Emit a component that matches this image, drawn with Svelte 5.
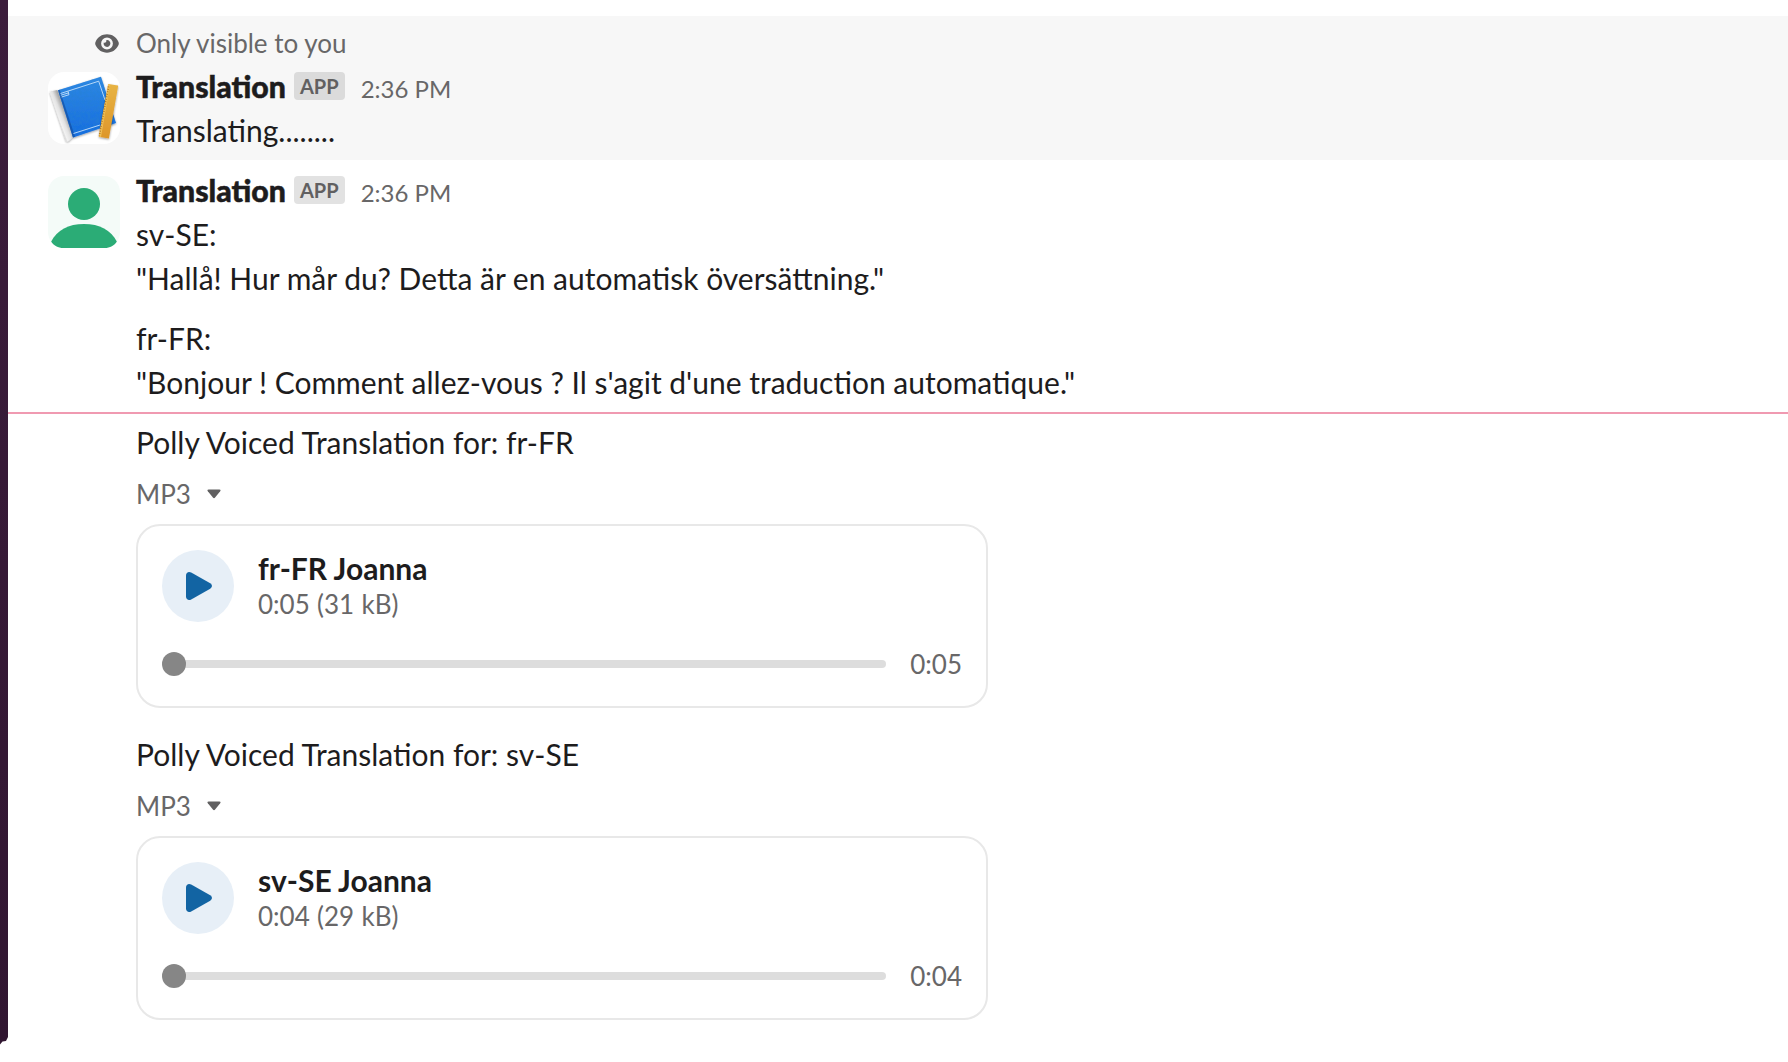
<script>
  const files = [
    { lang: 'fr-FR', length: '0:05', size: '31 kB' },
    { lang: 'sv-SE', length: '0:04', size: '29 kB' },
  ];
</script>

{#snippet author()}
  <div class="author">
    <span class="name">Translation</span>
    <span class="badge">APP</span>
    <span class="time">2:36 PM</span>
  </div>
{/snippet}

<div class="window">
  <svg class="rail" width="8" height="1044" viewBox="0 0 8 1044">
    <defs>
      <linearGradient id="rail" x1="0" y1="0" x2="0" y2="1">
        <stop offset="0" stop-color="#3c1d3c" />
        <stop offset="1" stop-color="#311631" />
      </linearGradient>
    </defs>
    <path d="M0 0H8V1037L6 1041L2.500 1041.500L0 1044.500Z" fill="url(#rail)" />
  </svg>

  <main>
    <section class="message ephemeral">
      <div class="notice">
        <svg class="eye" width="24" height="20" viewBox="0 0 24 20">
          <path fill="#616061" fill-rule="evenodd" d="M12 1.300C6.800 1.300 2.900 4 .5 8.900Q-.1 10.500 .5 12.100C2.900 17 6.800 19.700 12 19.700S21.100 17 23.500 12.100Q24.100 10.500 23.500 8.900C21.100 4 17.200 1.300 12 1.300ZM12 4.600a5.900 5.900 0 1 1 0 11.800a5.900 5.900 0 0 1 0-11.800Z" />
          <path fill="#616061" d="M12 7.100a3.400 3.400 0 1 1-3.200 2.300a1.700 1.700 0 0 0 2.400-2.200Q11.500 7.100 12 7.100Z" />
        </svg>
        <span>Only visible to you</span>
      </div>
      <div class="row">
        <svg class="avatar" width="72" height="72" viewBox="0 0 72 72">
          <defs>
            <linearGradient id="cover" x1="0" y1="0" x2="0" y2="1">
              <stop offset="0" stop-color="#2f89e4" />
              <stop offset="1" stop-color="#146be0" />
            </linearGradient>
            <linearGradient id="pages" gradientUnits="userSpaceOnUse" x1="7" y1="44" x2="17" y2="40">
              <stop offset="0" stop-color="#c9c9c9" />
              <stop offset=".25" stop-color="#f2f2f2" />
              <stop offset=".6" stop-color="#e2e2e2" />
              <stop offset="1" stop-color="#a9a9a9" />
            </linearGradient>
            <linearGradient id="ruler" x1="0" y1="0" x2="0" y2="1">
              <stop offset="0" stop-color="#e8b445" />
              <stop offset="1" stop-color="#dd962a" />
            </linearGradient>
            <filter id="shade" x="-20%" y="-20%" width="140%" height="140%">
              <feDropShadow dx="0" dy="1" stdDeviation="1.100" flood-color="#000" flood-opacity=".4" />
            </filter>
            <filter id="grain">
              <feTurbulence type="fractalNoise" baseFrequency=".35" numOctaves="2" seed="4" />
              <feColorMatrix values="0 0 0 0 .02  0 0 0 0 .22  0 0 0 0 .62  2 0 0 0 -.65" />
              <feComposite in2="SourceGraphic" operator="in" />
            </filter>
          </defs>
          <rect width="72" height="72" rx="16" fill="#fff" />
          <g filter="url(#shade)">
            <path d="M2 20.500Q1.800 19.600 2.800 19.300L9.500 18L25 65L20.500 69Q18.800 70 18 68.500Z" fill="url(#pages)" />
            <path d="M10 18.300L53 4.700L68 51L25 65.500Z" fill="url(#cover)" />
          </g>
          <path d="M10 18.300L53 4.700L68 51L25 65.500Z" fill="#fff" filter="url(#grain)" opacity=".5" />
          <path d="M10 18.300L11.700 17.800L27 64.800L25 65.500Z" fill="#124c9c" opacity=".65" />
          <path d="M12.500 21.500L50.700 9.200L57 28M25.500 61.500L52 53M13.600 25L21 22.700L20 19.300M12.900 23.200L20.500 20.900" fill="none" stroke="#c5e0fa" stroke-width=".9" />
          <g filter="url(#shade)">
            <path d="M60.300 12.100L69.800 13.600Q70.200 13.700 70.100 14.300L60.900 66.500L50.800 64.700Z" fill="url(#ruler)" />
          </g>
          <path d="M60.300 12.100L62.100 12.400L53 65.100L50.800 64.700Z" fill="#efbf55" />
          <path d="M60.600 14.500L51.300 64" fill="none" stroke="#a96f20" stroke-width="1.600" stroke-dasharray=".8 1.700" />
        </svg>
        <div class="body">
          {@render author()}
          <p>Translating........</p>
        </div>
      </div>
    </section>

    <section class="message">
      <div class="row">
        <svg class="avatar" width="72" height="72" viewBox="0 0 72 72">
          <rect width="72" height="72" rx="16" fill="#f4fbf8" />
          <circle cx="36" cy="28" r="16" fill="#2bac76" />
          <path d="M3.200 65.500C9 54 20.500 48 36 48S63 54 68.800 65.500C66.500 69.500 62 72 56.500 72H15.500C10 72 5.500 69.500 3.200 65.500Z" fill="#2bac76" />
        </svg>
        <div class="body">
          {@render author()}
          <p>sv-SE:</p>
          <p>"Hallå! Hur mår du? Detta är en automatisk översättning."</p>
          <p class="spaced">fr-FR:</p>
          <p>"Bonjour ! Comment allez-vous ? Il s'agit d'une traduction automatique."</p>
        </div>
      </div>
    </section>

    <hr />

    <section class="files">
      {#each files as file}
        <article>
          <p>Polly Voiced Translation for: {file.lang}</p>
          <div class="kind">
            <span>MP3</span>
            <svg width="14" height="10" viewBox="0 0 14 10">
              <path d="M1.600 .5H12.400Q14.200 .7 13.200 2.300L8.100 8.600Q7 9.800 5.900 8.600L.8 2.300Q-.2 .7 1.600 .5Z" fill="#616061" />
            </svg>
          </div>
          <div class="card">
            <div class="summary">
              <svg width="72" height="72" viewBox="0 0 72 72">
                <circle cx="36" cy="36" r="36" fill="#e7eff7" />
                <path d="M24 25.500C24 22.500 26.700 21.200 29.200 22.600L48.200 33.300Q51.800 36 48.200 38.700L29.200 49.400C26.700 50.800 24 49.500 24 46.500Z" fill="#1264a3" />
              </svg>
              <div class="meta">
                <div class="title">{file.lang} Joanna</div>
                <div class="detail">{file.length} ({file.size})</div>
              </div>
            </div>
            <div class="player">
              <div class="scrub"><span class="knob"></span><span class="track"></span></div>
              <span class="duration">{file.length}</span>
            </div>
          </div>
        </article>
      {/each}
    </section>
  </main>
</div>

<style>
  :global(body) {
    background: #fff;
    overflow: hidden;
  }
  .window {
    display: flex;
    align-items: flex-start;
    width: 1788px;
    height: 1062px;
    font-family: Lato, sans-serif;
    font-size: 30px;
    line-height: 44px;
    color: #1d1c1d;
    font-variant-ligatures: common-ligatures;
  }
  .rail {
    flex: none;
    display: block;
    overflow: visible;
  }
  main {
    flex: 1;
    padding-top: 16px;
  }
  .message {
    padding: 8px 40px;
  }
  .ephemeral {
    background: #f7f7f7;
  }
  .notice {
    display: flex;
    align-items: center;
    gap: 17px;
    height: 38px;
    margin-bottom: 2px;
    padding-left: 47px;
    font-size: 26px;
    color: #686768;
  }
  .row {
    display: flex;
    gap: 16px;
  }
  .avatar {
    flex: none;
    display: block;
    margin-top: 8px;
  }
  .author {
    display: flex;
    align-items: baseline;
    height: 44px;
  }
  .name {
    font-size: 30.25px;
    font-weight: 900;
    -webkit-text-stroke: 0.5px #1d1c1d;
  }
  .badge {
    align-self: flex-start;
    margin: 8px 16px 0 8px;
    padding: 0 6px;
    height: 28px;
    border-radius: 4px;
    background: rgba(29, 28, 29, 0.13);
    color: #616061;
    font-size: 20px;
    font-weight: 700;
    line-height: 29px;
  }
  .time {
    font-size: 24px;
    color: #686768;
  }
  p {
    margin: 0;
    white-space: nowrap;
  }
  .spaced {
    margin-top: 16px;
  }
  hr {
    height: 2px;
    margin: 0;
    border: 0;
    background: #f09ab1;
  }
  .files {
    display: flex;
    flex-direction: column;
    gap: 24px;
    padding: 6px 0 0 128px;
  }
  .kind {
    display: flex;
    align-items: center;
    gap: 16px;
    height: 60px;
    font-size: 26px;
    color: #686768;
  }
  .card {
    box-sizing: border-box;
    width: 852px;
    height: 184px;
    padding: 24px;
    border: 2px solid #e8e8e8;
    border-radius: 24px;
  }
  .summary {
    display: flex;
    gap: 24px;
    height: 72px;
  }
  .title {
    line-height: 36px;
    font-weight: 700;
  }
  .detail {
    font-size: 26px;
    line-height: 36px;
    word-spacing: 0.7px;
    color: #686768;
  }
  .player {
    display: flex;
    align-items: center;
    gap: 24px;
    height: 24px;
    margin-top: 30px;
  }
  .scrub {
    flex: 1;
    display: flex;
    align-items: center;
  }
  .knob {
    z-index: 1;
    width: 24px;
    height: 24px;
    border-radius: 50%;
    background: #868686;
  }
  .track {
    flex: 1;
    height: 8px;
    margin-left: -2px;
    border-radius: 0 4px 4px 0;
    background: #ddd;
  }
  .duration {
    font-size: 26px;
    color: #686768;
  }
</style>
